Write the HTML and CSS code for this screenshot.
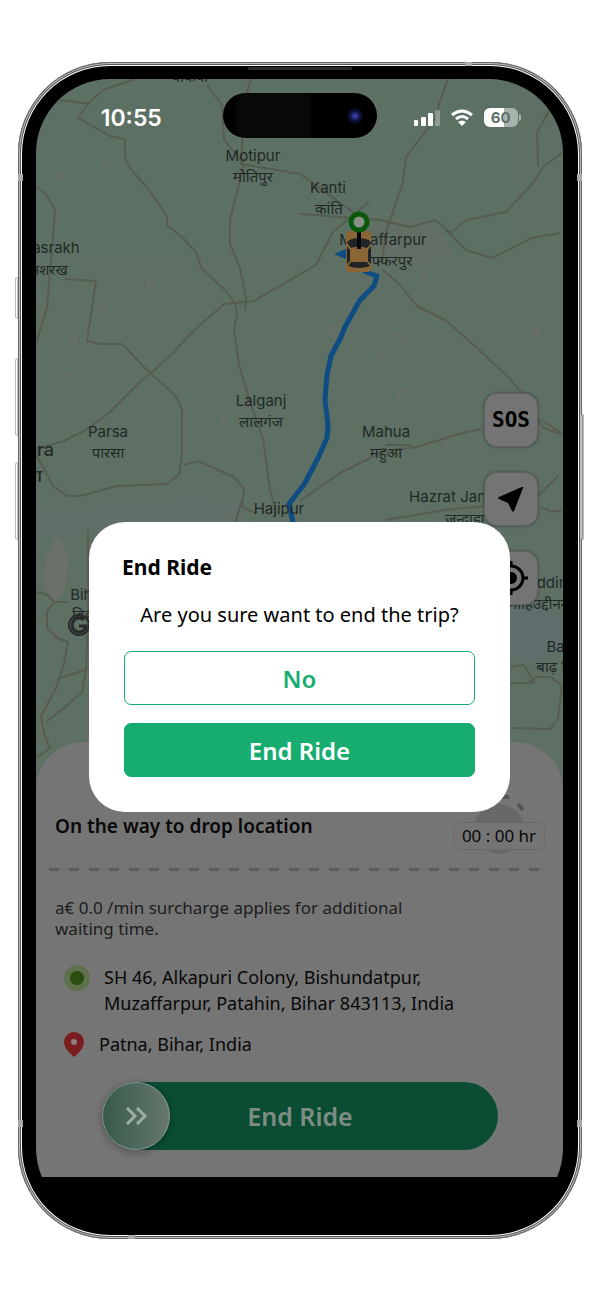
FILE: index.html
```
<!DOCTYPE html>
<html lang="en">
<head>
    <meta charset="UTF-8">
    <meta name="viewport" content="width=device-width, initial-scale=1.0">
    <title>End Ride</title>
    <link rel="stylesheet" href="styles.css">
</head>
<body>

<div class="phone">
    <span class="side-key mute"></span>
    <span class="side-key vol-up"></span>
    <span class="side-key vol-down"></span>
    <span class="side-key power"></span>
    <span class="band band-tl"></span>
    <span class="band band-tr"></span>
    <span class="band band-bl"></span>
    <span class="band band-br"></span>
    <span class="band-h band-top"></span>
    <span class="band-h band-bottom"></span>
    <span class="speaker"></span>

    <div class="screen">
        <div class="map">
            <svg class="map-canvas" viewBox="36 79 527 713" preserveAspectRatio="xMidYMin slice">
                <!-- towns and river -->
                <g fill="#6b7069">
                    <path d="M56 536q10 8 12 26l-4 30-12 12-8-20 2-28z"/>
                    <path d="M36 505l30 8 36-8 40-4 60-6 40 10v30H36z" fill="#626f68"/>
                    <path d="M510 600l24-6 29 30v26l-30 10-23-4z" fill="#5f6e6d"/>
                    <path d="M372 225l50-8 20 14 10 24-30 10-50-6z" fill="#636f65"/>
                    <path d="M70 336h8v12h-8zM96 300l10 8-4 10zM146 280l6-3 2 12-6 2zM58 369l10 10 4-4zM328 320l10 8-4 12-8-6zM375 350l10 4-2 14zM420 272l6 2-2 14zM440 430l8 6-2 24zM342 300l12 6-6 10zM530 330l12-6-2 12zM390 384l16 6-8 14zM215 408l14 14-8 2zM390 330l18 6-3 10zM170 130l4 8zM55 172l12 3-6 6zM100 160l12 5-8 4z" opacity=".55"/>
                </g>
                <g fill="none" stroke="#56564a" stroke-width="2" stroke-linejoin="round" opacity=".75">
                    <path d="M60 100l28 4 15-14 32-11M88 104l-10 14 32 18 15 3v19l5 10 20 23 17 26v8l15 12 14 15 6 17 24 22 9 13 2 11-3 14 5 36 10 34 14 40 7 50 6 25"/>
                    <path d="M36 187l10 7 9 16-3 40-2 22-3 36-11 35M65 279l31 2-9 60 13 3 22 0 27 28 27 24 6 14v44l-3 20-12 10-50 2-22 6-14 4h-14l-14-10-12-23-8-12"/>
                    <path d="M36 449l28-8 22-11 24-18 31-31 10-8 24-22 16-18 33-29 30-3 24-14 38-22 17-33 36-30"/>
                    <path d="M207 85l15 20 2 35 20 24-14 56 0 24 10 24 6 30-1 12M251 79l-6 20-4 65 59 10 60 43"/>
                    <path d="M448 79l-8 22-5 18-29 38-3 25-17 50-4 30M300 214l80 6 30 7 25-7 16 13 15-13 40-8 28-30 10-16 22-16M538 167l-1-34 12-22M446 230l20 20 26 8 40-20 28-5M383 270l18 16 16 20 28 14 30 26 32 30 16 18 20 34 18 6 20-6M542 420l18 12M300 501l40-28 20-10 24-12 32-4 50-15 16-3M386 445l26 0M385 520l60-10 50-5 42-8 22-22M540 507l12 5 10-2"/>
                    <path d="M184 465l14-4 36 16 10 12-2 18 14 6M242 500l-8 27M36 592l10 2 8 8-7 10 0 16 10 10 11 4-4 22-7 22-16 30 3 18 6 14-14 10M54 602h14M57 679l28-9 6-4M88 530v90l-2 50-4 22-18 16-18 14M510 667l14-2 10 18h-24M510 683h18l8-6h14l12 8-4 34-8 10-38-1"/>
                </g>
                <path d="M334 254l14-6v12z" fill="#0e4d83"/>
                <path d="M345 253l21 19 11 4-3 10-14 14-15 27-4 10-10 19-4 19-2 25 3 25-1 13-9 20-13 25-16 21 4 19" fill="none" stroke="#0e4d83" stroke-width="5" stroke-linejoin="round"/>
                <g class="place" text-anchor="middle">
                    <text x="190" y="82">वाकया</text>
                    <text x="253" y="161">Motipur</text>
                    <text x="253" y="182">मोतिपुर</text>
                    <text x="328" y="193">Kanti</text>
                    <text x="329" y="214">कांति</text>
                    <text x="383" y="245">Muzaffarpur</text>
                    <text x="382" y="266">मुज़फ्फरपुर</text>
                    <text x="51" y="253">Basrakh</text>
                    <text x="49" y="275">मशरख</text>
                    <text x="261" y="406">Lalganj</text>
                    <text x="261" y="427">लालगंज</text>
                    <text x="108" y="437">Parsa</text>
                    <text x="108" y="458">पारसा</text>
                    <text x="386" y="437">Mahua</text>
                    <text x="386" y="458">महुआ</text>
                    <text x="279" y="514">Hajipur</text>
                    <text x="465" y="502">Hazrat Jandaha</text>
                    <text x="465" y="524">जन्दाहा</text>
                    <text x="88" y="600">Bihta</text>
                    <text x="88" y="620">बिहटा</text>
                    <text x="546" y="588">Mohiuddinagar</text>
                    <text x="546" y="609">मोहिउद्दीननगर</text>
                    <text x="563" y="652">Barh</text>
                    <text x="555" y="672">बाढ़ नि</text>
                </g>
                <g class="city" text-anchor="end">
                    <text x="54" y="456">Chapra</text>
                    <text x="42" y="482">छपरा</text>
                </g>
                <g fill="none" stroke="#292b2a" stroke-width="2">
                    <circle cx="79" cy="625" r="10"/>
                    <path d="M84 620a7 7 0 1 0 2 6h-7" stroke-width="3"/>
                </g>
                <!-- car -->
                <rect x="346" y="231" width="25" height="41" rx="4" fill="#896634"/>
                <path d="M349 240q10-4 20 0l2 3-4 5q-8-3-16 0l-4-5zM347 246l3 4v11l-3 3zM371 246l-3 4v11l3 3zM351 262h16l3 4q-11 4-22 0z" fill="#1f2527"/>
                <!-- pickup pin -->
                <path d="M359 228v21" stroke="#050505" stroke-width="4"/>
                <circle cx="359" cy="222" r="8" fill="#8b9087" stroke="#08590c" stroke-width="5"/>
            </svg>

            <div class="map-actions">
                <button type="button" class="map-btn sos">SOS</button>
                <button type="button" class="map-btn" aria-label="Navigate">
                    <svg width="28" height="28" viewBox="0 0 28 28"><path d="M25 2q2-1 1 1L17 26q-1 1-2 0l-4-8-9-4q-2-1 0-2z"/></svg>
                </button>
                <button type="button" class="map-btn" aria-label="My location">
                    <svg width="34" height="34" viewBox="0 0 34 34"><circle cx="17" cy="17" r="12" fill="none" stroke="#000" stroke-width="3"/><circle cx="17" cy="17" r="6"/><path d="M17 0v6M17 28v6M0 17h6M28 17h6" stroke="#000" stroke-width="3"/></svg>
                </button>
            </div>
        </div>

        <div class="status">
            <span class="time">10:55</span>
            <span class="island"><span class="lens"></span></span>
            <span class="status-icons">
                <svg width="26" height="17" viewBox="0 0 26 17" fill="#fff"><rect y="11" width="4" height="6" rx="1"/><rect x="7" y="8" width="5" height="9" rx="1"/><rect x="14" y="4" width="5" height="13" rx="1"/><rect x="21" y="1" width="5" height="16" rx="1" opacity=".3"/></svg>
                <svg width="24" height="17" viewBox="0 0 24 17" fill="none" stroke="#fff" stroke-width="3"><path d="M2 6q10-8 20 0M6 10q6-5 12 0"/><path d="M8 13q4-3 8 0l-4 4z" fill="#fff" stroke="none"/></svg>
                <span class="battery">60</span>
            </span>
        </div>

        <div class="sheet">
            <div class="trip-head">
                <h2>On the way to drop location</h2>
                <div class="timer">
                    <svg class="stopwatch" width="60" height="64" viewBox="0 0 60 64"><circle cx="30" cy="37" r="25" fill="#686868"/><path d="M21 5h19M49 12l5 6" stroke="#555" stroke-width="4"/></svg>
                    <span class="timer-value">00 : 00 hr</span>
                </div>
            </div>
            <div class="divider"></div>
            <p class="surcharge">a€ 0.0 /min surcharge applies for additional waiting time.</p>
            <div class="stop">
                <svg width="28" height="28" viewBox="0 0 28 28"><circle cx="14" cy="14" r="13" fill="#5f704d"/><circle cx="14" cy="14" r="7" fill="#2c4b0e"/></svg>
                <p>SH 46, Alkapuri Colony, Bishundatpur, Muzaffarpur, Patahin, Bihar 843113, India</p>
            </div>
            <div class="stop drop">
                <svg width="22" height="27" viewBox="0 0 22 27"><path d="M11 1a10 10 0 0 0-10 10q0 7 10 15 10-8 10-15a10 10 0 0 0-10-10z" fill="#7b1d1f"/><circle cx="11" cy="11" r="3" fill="#8d8080"/></svg>
                <p>Patna, Bihar, India</p>
            </div>
            <button type="button" class="slide">
                <span class="knob"><svg width="22" height="18" viewBox="0 0 22 18" fill="none" stroke="#9dafa6" stroke-width="3"><path d="M2 1l8 8-8 8M12 1l8 8-8 8"/></svg></span>
                <span class="slide-text">End Ride</span>
            </button>
        </div>
        <div class="home-area"></div>

        <div class="dialog" role="dialog" aria-labelledby="dialog-title">
            <h3 id="dialog-title">End Ride</h3>
            <p>Are you sure want to end the trip?</p>
            <button type="button" class="btn btn-outline">No</button>
            <button type="button" class="btn btn-solid">End Ride</button>
        </div>
    </div>
</div>

</body>
</html>
```
FILE: styles.css
```
* {
    box-sizing: border-box;
}
body {
    margin: 0;
    padding: 62px 18px 61px;
    background: #fff;
    font-family: "Noto Sans", sans-serif;
    color: #080808;
}
h2, h3, p {
    margin: 0;
}
button {
    font-family: inherit;
    padding: 0;
    cursor: pointer;
}
.phone {
    position: relative;
    padding: 17px 19px 17px 18px;
    border-radius: 92px;
    background: #000;
    box-shadow: inset 0 0 0 1px #666, inset 0 0 0 2px #bbb, inset 0 0 0 3px #555, inset 0 0 0 4px #fff;
}
.side-key {
    position: absolute;
    left: -3px;
    width: 3px;
    border: 1px solid #bbb;
    border-radius: 2px 0 0 2px;
}
.mute {
    top: 215px;
    height: 42px;
}
.vol-up {
    top: 296px;
    height: 78px;
}
.vol-down {
    top: 400px;
    height: 78px;
}
.power {
    left: auto;
    right: -2px;
    top: 352px;
    height: 126px;
    background: #999;
}
.band {
    position: absolute;
    width: 5px;
    height: 7px;
    background: #aaa;
}
.band-tl {
    left: 0;
    top: 112px;
}
.band-tr {
    right: 0;
    top: 112px;
}
.band-bl {
    left: 0;
    bottom: 112px;
}
.band-br {
    right: 0;
    bottom: 112px;
}
.band-h {
    position: absolute;
    width: 7px;
    height: 4px;
    background: #aaa;
}
.band-top {
    top: 0;
    right: 110px;
}
.band-bottom {
    bottom: 0;
    left: 110px;
}
.speaker {
    position: absolute;
    top: 5px;
    left: 50%;
    width: 104px;
    height: 3px;
    margin-left: -52px;
    border-radius: 2px;
    background: #2b2b2b;
}
.screen {
    position: relative;
    overflow: hidden;
    border-radius: 74px;
    background: #000;
}

/* map */
.map {
    position: relative;
    height: 713px;
    background: #5e7064;
}
.map-canvas {
    display: block;
    width: 100%;
    height: 100%;
}
.place, .city {
    font-family: Inter, "Noto Sans Devanagari", sans-serif;
    font-size: 15px;
    fill: #222826;
}
.city {
    font-size: 18px;
    font-weight: 500;
}
.map-actions {
    position: absolute;
    top: 314px;
    right: 25px;
    display: flex;
    flex-direction: column;
    gap: 25px;
}
.map-btn {
    display: flex;
    align-items: center;
    justify-content: center;
    width: 54px;
    height: 54px;
    border: 1px solid #626262;
    border-radius: 13px;
    background: #747474;
    box-shadow: 0 0 3px rgba(0, 0, 0, 0.4);
    color: #000;
}
.sos {
    font-family: "DejaVu Sans Mono", monospace;
    font-size: 21px;
    font-weight: bold;
}

/* status bar */
.status {
    position: absolute;
    top: 14px;
    left: 0;
    right: 0;
    display: grid;
    grid-template-columns: 1fr 154px 1fr;
    align-items: center;
    color: #fff;
    font-family: Inter, sans-serif;
}
.time {
    padding: 4px 0 0 4px;
    text-align: center;
    font-size: 23px;
    font-weight: 600;
}
.island {
    display: flex;
    align-items: center;
    justify-content: flex-end;
    height: 45px;
    padding-right: 14px;
    border-radius: 23px;
    background: linear-gradient(90deg, #000 10px, #080809 16px, #080809 84px, #000 92px);
}
.lens {
    width: 16px;
    height: 16px;
    border-radius: 50%;
    background: radial-gradient(circle, #3a3fae 10%, #12143f 40%, #050510 75%);
}
.status-icons {
    display: flex;
    align-items: center;
    justify-content: center;
    gap: 10px;
    padding: 3px 8px 0 0;
}
.battery {
    position: relative;
    width: 34px;
    height: 19px;
    border-radius: 6px;
    background: linear-gradient(90deg, #fff 60%, #a9b3ad 60%);
    color: #5e7064;
    font-size: 15px;
    font-weight: 700;
    line-height: 19px;
    text-align: center;
}
.battery::after {
    content: "";
    position: absolute;
    top: 6px;
    right: -3px;
    width: 2px;
    height: 7px;
    border-radius: 0 2px 2px 0;
    background: #a9b3ad;
}

/* bottom sheet */
.sheet {
    position: relative;
    margin-top: -50px;
    padding: 54px 18px 27px 19px;
    border-radius: 48px 48px 0 0;
    background: #757575;
}
.trip-head {
    display: flex;
    justify-content: space-between;
    height: 72px;
}
.trip-head h2 {
    padding-top: 16px;
    font-size: 19px;
    font-weight: 600;
    line-height: 28px;
}
.timer {
    position: relative;
    align-self: flex-start;
    padding-top: 26px;
}
.stopwatch {
    position: absolute;
    top: -4px;
    left: 16px;
}
.timer-value {
    position: relative;
    display: block;
    width: 92px;
    border: 1px solid #696969;
    border-radius: 7px;
    background: #757575;
    font-size: 17px;
    line-height: 26px;
    text-align: center;
}
.divider {
    height: 3px;
    margin-left: -6px;
    background: repeating-linear-gradient(90deg, #5c5c5c 0 10px, transparent 10px 20px);
}
.surcharge {
    max-width: 400px;
    margin-top: 26px;
    font-size: 17px;
    line-height: 21px;
    color: #1c1c1c;
}
.stop {
    display: flex;
    gap: 13px;
    margin-top: 25px;
    padding-left: 8px;
    font-size: 18px;
    line-height: 26px;
}
.stop p {
    max-width: 390px;
}
.stop svg {
    flex: none;
}
.drop {
    gap: 14px;
    margin-top: 15px;
}
.slide {
    display: flex;
    align-items: center;
    width: calc(100% - 94px);
    height: 68px;
    margin: 24px 47px 0;
    border: none;
    border-radius: 34px;
    background: #0b4d33;
    color: #7f8c84;
}
.knob {
    display: flex;
    align-items: center;
    justify-content: center;
    width: 68px;
    height: 68px;
    border: 1px solid #8a9690;
    border-radius: 50%;
    background: linear-gradient(90deg, #385a4a, #66776e);
    box-shadow: 0 2px 8px rgba(0, 0, 0, 0.3);
}
.slide-text {
    flex: 1;
    padding-right: 68px;
    font-size: 25px;
    font-weight: 600;
    text-align: center;
}
.home-area {
    height: 45px;
    background: #000;
}

/* confirm dialog */
.dialog {
    position: absolute;
    top: 443px;
    left: 53px;
    right: 53px;
    padding: 30px 35px 35px;
    border-radius: 36px;
    background: #fff;
    color: #000;
}
.dialog h3 {
    margin-left: -2px;
    font-size: 21px;
    line-height: 30px;
}
.dialog p {
    margin: 19px 0 22px;
    font-size: 20px;
    line-height: 28px;
    text-align: center;
}
.btn {
    display: block;
    width: 100%;
    height: 54px;
    border: 1px solid #18ad70;
    border-radius: 7px;
    font-size: 24px;
    font-weight: 600;
}
.btn-outline {
    background: #fff;
    color: #18ad70;
}
.btn-solid {
    margin-top: 18px;
    background: #18ad70;
    color: #fff;
}
```
